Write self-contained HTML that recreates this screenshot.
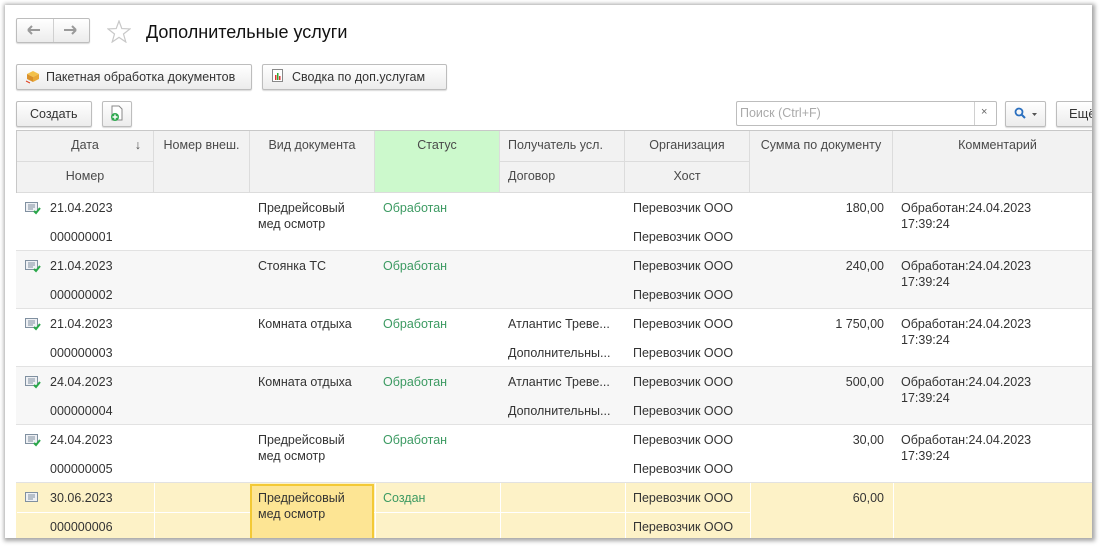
<!DOCTYPE html>
<html><head><meta charset="utf-8"><style>
*{box-sizing:border-box;margin:0;padding:0}
body{width:1101px;height:547px;background:#fff;font-family:"Liberation Sans",Arial,sans-serif;font-size:12.5px;color:#333;position:relative;overflow:hidden}
.win{position:absolute;left:5px;top:5px;width:1087px;height:533px;background:#fff;box-shadow:1px 1px 4px 2px rgba(0,0,0,.35);overflow:hidden}
.a{position:absolute}
.btn{position:absolute;border:1px solid #bdbdbd;border-radius:2px;background:linear-gradient(#fff,#ececec);box-shadow:0 1px 1px rgba(0,0,0,.15);font-size:12.5px;color:#333;white-space:nowrap}
.hd{position:absolute;background:#f2f2f2;border-right:1px solid #dcdcdc;border-bottom:1px solid #dcdcdc;color:#4a4a4a;font-size:12.5px;text-align:center}
.t{position:absolute;white-space:nowrap;font-size:12.5px;color:#333}
.g{color:#3c9a62}
.r{position:absolute;left:11px;width:1080px;border-bottom:1px solid #e2e2e2}
</style></head><body>
<div class="win">
<div class="btn" style="left:11px;top:13px;width:74px;height:25px"></div>
<div class="a" style="left:48px;top:14px;width:1px;height:23px;background:#d0d0d0"></div>
<svg class="a" style="left:22px;top:19px" width="14" height="12"><path d="M1 6H13M1 6L5 2M1 6L5 10" stroke="#9a9a9a" stroke-width="2" fill="none"/></svg>
<svg class="a" style="left:58px;top:19px" width="14" height="12"><path d="M1 6H13M13 6L9 2M13 6L9 10" stroke="#9a9a9a" stroke-width="2" fill="none"/></svg>
<svg class="a" style="left:102px;top:15px" width="24" height="23"><path d="M12 1L14.8 8.6 23 8.9 16.5 14 18.8 22 12 17.4 5.2 22 7.5 14 1 8.9 9.2 8.6Z" fill="none" stroke="#c8c8c8" stroke-width="1.2"/></svg>
<div class="t" style="left:141px;top:17px;font-size:18px;color:#111">Дополнительные услуги</div>
<div class="btn" style="left:11px;top:59px;width:236px;height:26px"></div>
<svg class="a" style="left:20px;top:64px" width="15" height="15"><path d="M2 5L8 2 14 5 8 8Z" fill="#f3c14a"/><path d="M2 5V10L8 13V8Z" fill="#d9902a"/><path d="M14 5V10L8 13V8Z" fill="#e8a838"/><path d="M1 12L5 14" stroke="#e04020"/></svg>
<div class="t" style="left:41px;top:65px">Пакетная обработка документов</div>
<div class="btn" style="left:257px;top:59px;width:185px;height:26px"></div>
<svg class="a" style="left:267px;top:64px" width="12" height="14"><rect x=".5" y=".5" width="10" height="12" fill="#fff" stroke="#888"/><rect x="3" y="6" width="1.5" height="5" fill="#d33"/><rect x="5" y="4" width="1.5" height="7" fill="#3a3"/><rect x="7" y="7" width="1.5" height="4" fill="#d33"/></svg>
<div class="t" style="left:287px;top:65px">Сводка по доп.услугам</div>
<div class="btn" style="left:11px;top:96px;width:76px;height:26px"></div>
<div class="t" style="left:25px;top:102px">Создать</div>
<div class="btn" style="left:97px;top:96px;width:30px;height:26px"></div>
<svg class="a" style="left:104px;top:100px" width="16" height="18"><path d="M3 1H10L13 4V15H3Z" fill="#fff" stroke="#888"/><circle cx="6" cy="12" r="4" fill="#2fa84f"/><path d="M6 9.5V14.5M3.5 12H8.5" stroke="#fff" stroke-width="1.4"/></svg>
<div class="a" style="left:731px;top:96px;width:261px;height:25px;border:1px solid #bdbdbd;border-radius:2px;background:#fff"></div>
<div class="a" style="left:969px;top:97px;width:1px;height:23px;background:#d0d0d0"></div>
<div class="t" style="left:735px;top:101px;color:#aaa">Поиск (Ctrl+F)</div>
<div class="t" style="left:976px;top:101px;color:#666;font-size:11px">×</div>
<div class="btn" style="left:1000px;top:96px;width:41px;height:26px"></div>
<svg class="a" style="left:1009px;top:102px" width="24" height="13"><circle cx="5" cy="5" r="3.5" fill="none" stroke="#2a6fbf" stroke-width="1.8"/><path d="M7.5 7.5L11 11" stroke="#2a6fbf" stroke-width="2"/><path d="M18 6H23L20.5 9Z" fill="#555"/></svg>
<div class="btn" style="left:1051px;top:96px;width:60px;height:26px"></div>
<div class="t" style="left:1064px;top:101px;font-size:13px">Ещё</div>
<div class="a" style="left:11px;top:125px;width:1px;height:420px;background:#c8c8c8"></div>
<div class="a" style="left:11px;top:125px;width:1080px;height:1px;background:#c8c8c8"></div>
<div class="hd" style="left:12px;top:126px;width:137px;height:31px;line-height:29px">Дата<span style="position:absolute;right:12px">↓</span></div>
<div class="hd" style="left:12px;top:157px;width:137px;height:31px;line-height:29px">Номер</div>
<div class="hd" style="left:149px;top:126px;width:96px;height:62px;line-height:29px">Номер внеш.</div>
<div class="hd" style="left:245px;top:126px;width:125px;height:62px;line-height:29px">Вид документа</div>
<div class="hd" style="left:370px;top:126px;width:125px;height:62px;line-height:29px;background:#ccf9cc">Статус</div>
<div class="hd" style="left:495px;top:126px;width:125px;height:31px;line-height:29px;text-align:left;padding-left:8px">Получатель усл.</div>
<div class="hd" style="left:495px;top:157px;width:125px;height:31px;line-height:29px;text-align:left;padding-left:8px">Договор</div>
<div class="hd" style="left:620px;top:126px;width:125px;height:31px;line-height:29px">Организация</div>
<div class="hd" style="left:620px;top:157px;width:125px;height:31px;line-height:29px">Хост</div>
<div class="hd" style="left:745px;top:126px;width:143px;height:62px;line-height:29px">Сумма по документу</div>
<div class="hd" style="left:888px;top:126px;width:210px;height:62px;line-height:29px">Комментарий</div>
<div class="r" style="top:188px;height:58px;background:#fff"></div>
<div class="r" style="top:246px;height:58px;background:#f7f7f7"></div>
<div class="r" style="top:304px;height:58px;background:#fff"></div>
<div class="r" style="top:362px;height:58px;background:#f7f7f7"></div>
<div class="r" style="top:420px;height:58px;background:#fff"></div>
<div class="r" style="top:478px;height:60px;background:#fdf2c7;border:none"></div>
<div class="a" style="left:12px;top:507px;width:483px;height:1px;background:#fff"></div>
<div class="a" style="left:495px;top:507px;width:250px;height:1px;background:#fff"></div>
<div class="a" style="left:149px;top:478px;width:1px;height:60px;background:#fff"></div>
<div class="a" style="left:370px;top:478px;width:1px;height:60px;background:#fff"></div>
<div class="a" style="left:495px;top:478px;width:1px;height:60px;background:#fff"></div>
<div class="a" style="left:620px;top:478px;width:1px;height:60px;background:#fff"></div>
<div class="a" style="left:745px;top:478px;width:1px;height:60px;background:#fff"></div>
<div class="a" style="left:888px;top:478px;width:1px;height:60px;background:#fff"></div>
<div class="a" style="left:245px;top:479px;width:124px;height:56px;background:#fde594;border:2px solid #f3c935"></div>
<svg width="0" height="0" style="position:absolute"><defs><g id="ic"><rect x=".5" y=".5" width="12" height="9" fill="#eef0f4" stroke="#8090a0"/><path d="M3 3H10M3 5H10M3 7H8" stroke="#8090a0"/></g></defs></svg>
<div id="rows"></div>
</div>
<script>
var d=[["21.04.2023","000000001","Предрейсовый<br>мед осмотр","Обработан","","","180,00",1],
["21.04.2023","000000002","Стоянка ТС","Обработан","","","240,00",1],
["21.04.2023","000000003","Комната отдыха","Обработан","Атлантис Треве...","Дополнительны...","1 750,00",1],
["24.04.2023","000000004","Комната отдыха","Обработан","Атлантис Треве...","Дополнительны...","500,00",1],
["24.04.2023","000000005","Предрейсовый<br>мед осмотр","Обработан","","","30,00",1],
["30.06.2023","000000006","Предрейсовый<br>мед осмотр","Создан","","","60,00",0]];
var h="";d.forEach(function(r,i){var y=196+58*i;
h+='<svg class="a" style="left:20px;top:'+(y+1)+'px" width="16" height="13"><use href="#ic"/>'+(r[7]?'<path d="M9 9L11 11 15 6" stroke="#2aa84a" stroke-width="2" fill="none"/>':'')+'</svg>';
h+='<div class="t" style="left:45px;top:'+y+'px">'+r[0]+'</div>';
h+='<div class="t" style="left:45px;top:'+(y+29)+'px">'+r[1]+'</div>';
h+='<div class="t" style="left:253px;top:'+y+'px;line-height:16px;margin-top:-1px">'+r[2]+'</div>';
h+='<div class="t g" style="left:378px;top:'+y+'px">'+r[3]+'</div>';
h+='<div class="t" style="left:503px;top:'+y+'px">'+r[4]+'</div>';
h+='<div class="t" style="left:503px;top:'+(y+29)+'px">'+r[5]+'</div>';
h+='<div class="t" style="left:628px;top:'+y+'px">Перевозчик ООО</div>';
h+='<div class="t" style="left:628px;top:'+(y+29)+'px">Перевозчик ООО</div>';
h+='<div class="t" style="right:208px;top:'+y+'px">'+r[6]+'</div>';
if(r[7])h+='<div class="t" style="left:896px;top:'+y+'px;line-height:16px;margin-top:-1px">Обработан:24.04.2023<br>17:39:24</div>';
});document.getElementById("rows").innerHTML=h;
</script>
</body></html>
